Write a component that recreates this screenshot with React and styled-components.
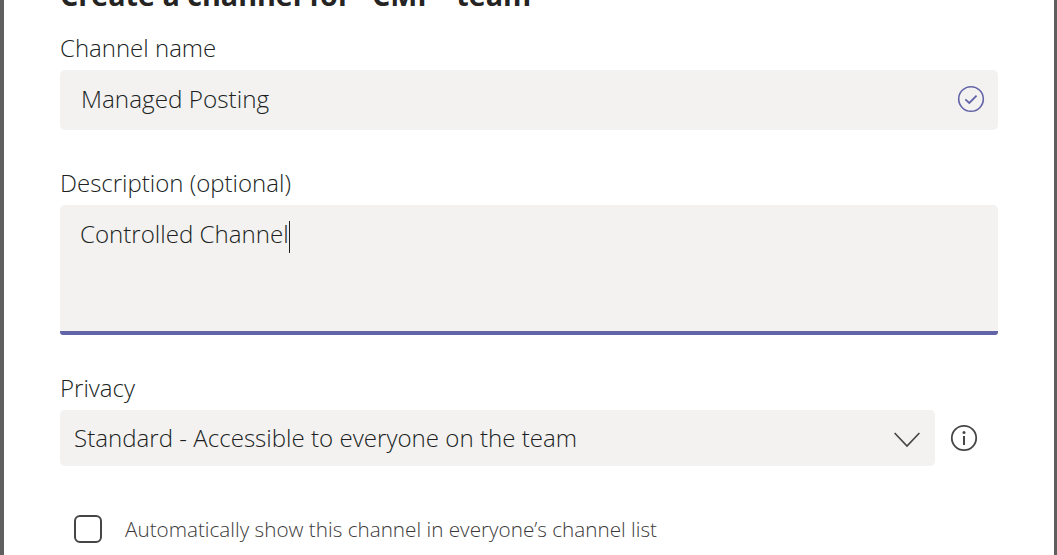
import { createGlobalStyle } from 'styled-components';
import styled from 'styled-components';

const GlobalStyle = createGlobalStyle`
  html, body {
    margin: 0;
    padding: 0;
    height: 555px;
    overflow: hidden;
    background: #ffffff;
  }
  * {
    box-sizing: border-box;
  }
`;

const Dialog = styled.div`
  width: 1057px;
  height: 555px;
  overflow: hidden;
  background: #ffffff;
  border-left: 4px solid #5f5f5f;
  border-right: 3px solid #5f5f5f;
  padding: 0 56px;
  font-family: 'Open Sans', 'Noto Sans', sans-serif;
  color: #201f1e;
`;

const Title = styled.h1`
  margin: -23px 0 18px;
  height: 36px;
  line-height: 36px;
  font-size: 28.7px;
  font-weight: 700;
  color: #252423;
  white-space: nowrap;
`;

const Label = styled.label`
  display: block;
  height: 34px;
  line-height: 34px;
  font-size: 24px;
  font-weight: 300;
  color: #201f1e;
`;

const Field = styled.div`
  width: 938px;
  margin-bottom: ${(p) => p.$gap}px;
`;

const InputBox = styled.div`
  display: flex;
  align-items: center;
  justify-content: space-between;
  height: 60px;
  padding: 0 13px 3px 21px;
  margin-top: 5px;
  background: #f3f2f1;
  border-radius: 5px;
  font-size: 24.3px;
  font-weight: 300;
`;

const TextArea = styled.div`
  height: 130px;
  padding: 9px 20px;
  margin-top: 5px;
  background: #f3f2f1;
  border-radius: 5px 5px 3px 3px;
  border-bottom: 4px solid #6264a7;
  font-size: 24.1px;
  font-weight: 300;
  line-height: 40px;
`;

const Caret = styled.span`
  display: inline-block;
  width: 1px;
  height: 32px;
  background: #201f1e;
  vertical-align: middle;
`;

const PrivacyRow = styled.div`
  display: flex;
  align-items: center;
  gap: 15px;
  margin-top: 5px;
`;

const Select = styled.div`
  display: flex;
  align-items: center;
  justify-content: space-between;
  width: 875px;
  height: 56px;
  padding: 0 15px 2px 14px;
  background: #f3f2f1;
  border-radius: 5px;
  font-size: 24.1px;
  font-weight: 300;
`;

const CheckRow = styled.div`
  display: flex;
  align-items: center;
  gap: 23px;
  margin-top: 49px;
  padding-left: 14px;
`;

const CheckBox = styled.span`
  width: 28px;
  height: 28px;
  border: 2px solid #484644;
  border-radius: 6px;
`;

const CheckText = styled.span`
  font-size: 20.7px;
  font-weight: 300;
  color: #3b3a39;
`;

const CheckCircle = () => (
  <svg width="28" height="28" viewBox="0 0 28 28" fill="none" stroke="#6264a7">
    <circle cx="14" cy="14" r="12.3" strokeWidth="1.6" />
    <path d="M8.3 14.4 L12.3 18 L19.6 10.6" strokeWidth="1.8" />
  </svg>
);

const Chevron = () => (
  <svg width="26" height="22" viewBox="0 0 26 22" fill="none" stroke="#484644">
    <path d="M0.6 7 L13 20 L25.4 7" strokeWidth="1.7" />
  </svg>
);

const InfoIcon = () => (
  <svg width="28" height="28" viewBox="0 0 28 28" fill="none" stroke="#484644">
    <circle cx="14" cy="14" r="12.2" strokeWidth="1.8" />
    <circle cx="14" cy="8.5" r="1.5" fill="#484644" stroke="none" />
    <path d="M14 12 V21" strokeWidth="2" />
  </svg>
);

const App = () => (
  <>
    <GlobalStyle />
    <Dialog>
      <Title>Create a channel for "CMP" team</Title>
      <Field $gap={36}>
        <Label>Channel name</Label>
        <InputBox>
          Managed Posting
          <CheckCircle />
        </InputBox>
      </Field>
      <Field $gap={36}>
        <Label>Description (optional)</Label>
        <TextArea>
          Controlled Channel
          <Caret />
        </TextArea>
      </Field>
      <Field $gap={0}>
        <Label>Privacy</Label>
        <PrivacyRow>
          <Select>
            Standard - Accessible to everyone on the team
            <Chevron />
          </Select>
          <InfoIcon />
        </PrivacyRow>
        <CheckRow>
          <CheckBox />
          <CheckText>Automatically show this channel in everyone’s channel list</CheckText>
        </CheckRow>
      </Field>
    </Dialog>
  </>
);

export default App;
